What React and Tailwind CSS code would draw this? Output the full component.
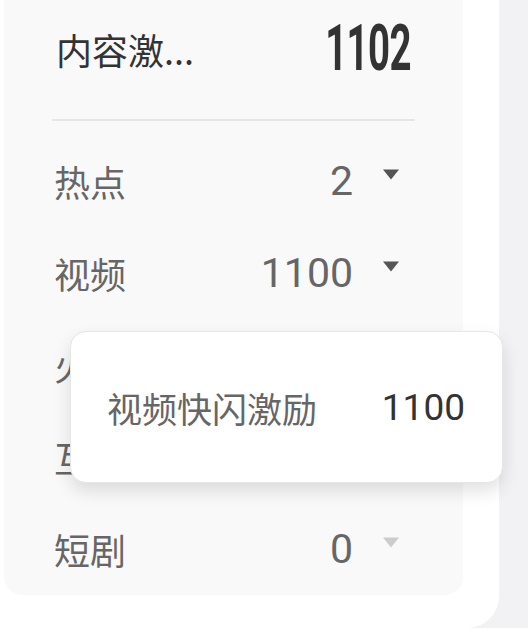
import React from "react";

const font = { fontFamily: '"Roboto", "Noto Sans CJK SC", sans-serif' };
const cjk = { fontFamily: '"Noto Sans CJK SC", sans-serif' };

function Tri({ muted }) {
  return (
    <svg width="18" height="11" viewBox="0 0 18 11" className="block">
      <path d="M1 0.5 H17 L9 10.5 Z" fill={muted ? "#cccccc" : "#555555"} />
    </svg>
  );
}

function Row({ label, value, muted }) {
  return (
    <div className="flex h-[92px] items-center justify-between pl-[50px] pr-[63px]">
      <span className="text-[36px] leading-none text-[#666]" style={cjk}>
        {label}
      </span>
      <div className="flex items-center gap-[29px]">
        <span className="text-[41px] leading-none text-[#666]" style={font}>
          {value}
        </span>
        <div className="-mt-[14px]">
          <Tri muted={muted} />
        </div>
      </div>
    </div>
  );
}

export default function App() {
  return (
    <div className="relative h-[628px] w-[528px] overflow-hidden bg-[#f2f2f4]" style={font}>
      <div className="h-[628px] w-[499px] rounded-br-[32px] bg-white pl-[4px]">
        <div className="h-[595px] w-[459px] rounded-b-[18px] bg-[#f9f9f9]">
          <div className="flex h-[98px] items-center justify-between pl-[52px] pr-[52px]">
            <span className="text-[36px] leading-none text-[#333]" style={cjk}>
              内容激...
            </span>
            <span
              className="inline-block origin-right scale-x-[0.6] text-[64px] font-bold leading-none tracking-[-1px] text-[#333]"
              style={font}
            >
              1102
            </span>
          </div>
          <div className="mx-[48px] mt-[21px] h-[2px] bg-[#e6e6e6]" />
          <div className="mt-[14px]">
            <Row label="热点" value="2" />
            <Row label="视频" value="1100" />
            <Row label="火山" value="0" />
            <Row label="互动" value="0" />
            <Row label="短剧" value="0" muted />
          </div>
        </div>
      </div>

      <div className="absolute left-[70px] top-[331px] z-10 flex h-[152px] w-[433px] items-center justify-between rounded-[16px] border-[1.5px] border-[#e6e6e6] bg-white pl-[36px] pr-[37px] shadow-[0_8px_18px_rgba(0,0,0,0.12)]">
        <span className="text-[35px] leading-none text-[#666]" style={cjk}>
          视频快闪激励
        </span>
        <span className="text-[37px] leading-none text-[#333]" style={font}>
          1100
        </span>
      </div>
    </div>
  );
}
